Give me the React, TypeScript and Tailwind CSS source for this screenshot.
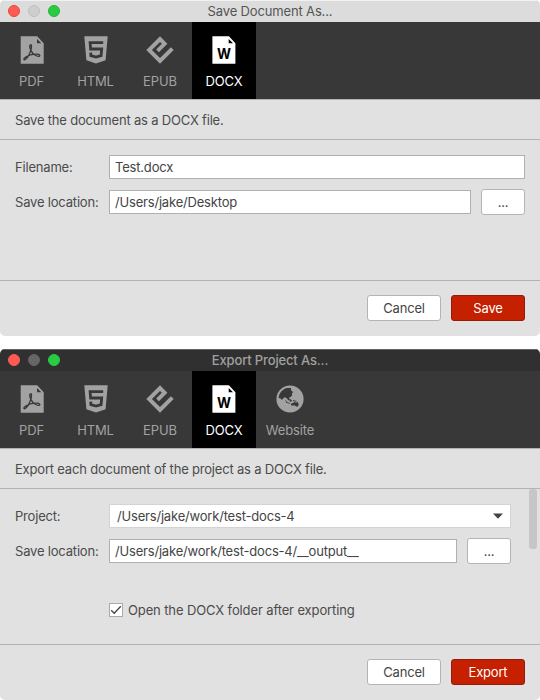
import type { ReactNode } from "react";

function PageShape() {
  return <path fillRule="evenodd" d="M0 0H16.5L23 7V27.5H0ZM16.3 2.6V7H20.6Z" />;
}

function PdfIcon() {
  return (
    <svg className="block h-7 w-6" viewBox="0 0 24 28" fill="currentColor">
      <g transform="translate(.7 .3)">
        <PageShape />
        <path
          d="M9.8 8.5C8.5 8.7 9 11.5 10.3 14.3C12.2 18.2 16 20.3 18.4 20C20 19.6 18.8 18 16.4 17.9C11.8 17.8 7 19.3 4.4 21.2C2.4 22.8 3.2 24.1 4.6 23.2C6.7 21.6 9.5 16.5 10.6 12C11 9.7 10.8 8.4 9.8 8.5Z"
          fill="none"
          stroke="#383838"
          strokeWidth="1.35"
        />
      </g>
    </svg>
  );
}

function HtmlIcon() {
  return (
    <svg className="block h-7 w-6" viewBox="0 0 24 28" fill="currentColor">
      <path d="M.3 .3H23.7L21.6 24.3L12 27.6L2.4 24.3Z" />
      <path
        d="M19.2 6.7H6.1L6.6 13H17.7L17.1 19.6L12 21.1L6.9 19.6L6.7 16.7"
        fill="none"
        stroke="#383838"
        strokeWidth="2.8"
      />
    </svg>
  );
}

function EpubIcon() {
  return (
    <svg className="block h-7 w-7" viewBox="0 0 28 28" fill="currentColor">
      <path d="M14 .3L21.4 7.7L12.9 16.2L10.2 13.5L15.9 7.8L14 5.9L5.9 14L14 22.1L24.9 11.2L27.7 14L14 27.7L.3 14Z" />
    </svg>
  );
}

function DocxIcon() {
  return (
    <svg className="block h-7 w-6" viewBox="0 0 24 28" fill="currentColor">
      <g transform="translate(.4 .3)">
        <PageShape />
        <text
          x="4.5"
          y="22.8"
          textLength="14"
          lengthAdjust="spacingAndGlyphs"
          className="fill-black font-['Inter',sans-serif] text-[14px] font-bold tracking-normal"
        >
          W
        </text>
      </g>
    </svg>
  );
}

function GlobeIcon() {
  return (
    <svg className="block h-7 w-7" viewBox="0 0 28 28" fill="currentColor">
      <circle cx="14" cy="14" r="13.6" />
      <g fill="#383838">
        <path d="M2.6 13.2C2.8 8.4 6.3 4.2 10.8 3L15.2 2.9L14.8 5L17.3 7.2L15.7 8.2L16.3 10L14.6 11.9L13 12.4L13.9 14.5L12.5 15.6L10.5 13L8.4 12.2L6.6 14.2L5.3 14.7L4.2 12.9Z" />
        <path d="M8.8 14.3L11.4 17.2L14 18L13.6 18.8L10.4 17.7Z" />
        <path d="M14.2 14L16 15.6L14.8 17L13.3 15.7Z" />
        <path d="M14.8 18.8L17.3 17.8L18.6 17L20.2 17.7L21.2 16.4L22.8 19.2L21.9 21.4L20.1 21.6L18.6 20.2L15.6 20.8Z" />
        <path d="M16.8 15L20.6 16.1L19.8 16.7L17 16Z" />
      </g>
    </svg>
  );
}

function Tab({ icon, label, width, active }: { icon: ReactNode; label: string; width: string; active?: boolean }) {
  return (
    <div
      className={`flex h-full flex-col items-center pt-[14px] ${width} ${
        active ? "bg-black text-white" : "text-[#a2a2a2]"
      }`}
    >
      <div className="flex h-7 items-center">{icon}</div>
      <span className="mt-[7px] text-[13px] leading-[20px] tracking-[-0.12px]">{label}</span>
    </div>
  );
}

function Toolbar({ website }: { website?: boolean }) {
  return (
    <div className="flex h-[77px] bg-[#383838]">
      <Tab width="w-[63px]" icon={<PdfIcon />} label="PDF" />
      <Tab width="w-[65px]" icon={<HtmlIcon />} label="HTML" />
      <Tab width="w-16" icon={<EpubIcon />} label="EPUB" />
      <Tab width="w-16" icon={<DocxIcon />} label="DOCX" active />
      {website && <Tab width="w-[68px]" icon={<GlobeIcon />} label="Website" />}
    </div>
  );
}

function TitleBar({ title, dark }: { title: string; dark?: boolean }) {
  return (
    <div
      className={`relative flex h-[22px] items-center justify-center border-t text-[13px] tracking-[-0.15px] ${
        dark ? "border-[#626262] bg-[#303030] font-medium text-[#a0a0a0]" : "border-[#f1f1f1] bg-[#dcdcdc] text-[#555]"
      }`}
    >
      <div className="absolute left-2 top-[4px] flex gap-2">
        <i className={`size-3 rounded-full border bg-[#ff5b52] ${dark ? "border-[#ff5b52]" : "border-[#e6453f]"}`} />
        <i className={`size-3 rounded-full border ${dark ? "border-[#666] bg-[#666]" : "border-[#bdbdbd] bg-[#cecece]"}`} />
        <i className={`size-3 rounded-full border bg-[#29cb43] ${dark ? "border-[#29cb43]" : "border-[#1fb636]"}`} />
      </div>
      <span className="-mt-px">{title}</span>
    </div>
  );
}

function Button({ children, primary, small }: { children: ReactNode; primary?: boolean; small?: boolean }) {
  return (
    <button
      className={`flex h-[26px] shrink-0 items-center justify-center rounded-[3px] border text-[13px] ${
        small ? "w-11" : "w-[74px]"
      } ${primary ? "border-[#941c08] bg-[#c52000] text-white" : "border-[#b4b4b4] bg-white text-[#444]"}`}
    >
      {children}
    </button>
  );
}

function Row({ label, children }: { label: string; children: ReactNode }) {
  return (
    <div className="flex h-[26px] items-center">
      <label className="w-[94px] shrink-0 whitespace-nowrap">{label}</label>
      {children}
    </div>
  );
}

function Field({ value }: { value: string }) {
  return (
    <div className="flex h-6 flex-1 items-center border border-[#b0b0b0] bg-white pl-[5px] text-[#444]">{value}</div>
  );
}

function Footer({ action }: { action: string }) {
  return (
    <div className="flex flex-1 justify-end gap-[10px] border-t border-[#b3b3b3] pr-[15px] pt-[14px]">
      <Button>Cancel</Button>
      <Button primary>{action}</Button>
    </div>
  );
}

export default function App() {
  return (
    <div className="flex h-[700px] w-[540px] flex-col gap-[13px] bg-white font-['Inter','Liberation_Sans',sans-serif] text-[13px] leading-5 tracking-[-0.19px] text-[#4b4b4b]">
      <section className="flex h-[336px] flex-col overflow-hidden rounded-[5px] bg-[#e1e1e1]">
        <TitleBar title="Save Document As..." />
        <Toolbar />
        <div className="flex h-[41px] items-center border-y border-[#b3b3b3] pl-[15px] pt-px">
          Save the document as a DOCX file.
        </div>
        <div className="flex h-[140px] flex-col gap-[9px] px-[15px] pt-[14px]">
          <Row label="Filename:">
            <Field value="Test.docx" />
          </Row>
          <Row label="Save location:">
            <Field value="/Users/jake/Desktop" />
            <div className="ml-[10px]">
              <Button small>...</Button>
            </div>
          </Row>
        </div>
        <Footer action="Save" />
      </section>

      <section className="flex h-[351px] flex-col overflow-hidden rounded-[5px] bg-[#e1e1e1]">
        <TitleBar title="Export Project As..." dark />
        <Toolbar website />
        <div className="flex h-[41px] items-center border-y border-[#b3b3b3] pl-[15px] pt-px">
          Export each document of the project as a DOCX file.
        </div>
        <div className="flex h-[155px] justify-between pl-[15px] pr-[3px]">
          <div className="flex w-[496px] flex-col gap-[9px] pt-[14px]">
            <Row label="Project:">
              <div className="flex h-6 flex-1 items-center justify-between border border-[#d3d3d3] bg-white pl-[7px] pr-[7px] text-[#444]">
                <span>/Users/jake/work/test-docs-4</span>
                <svg className="h-[6px] w-[10px]" viewBox="0 0 10 6" fill="#444">
                  <path d="M0 .5H10L5 5.8Z" />
                </svg>
              </div>
            </Row>
            <Row label="Save location:">
              <Field value="/Users/jake/work/test-docs-4/__output__" />
              <div className="ml-[10px]">
                <Button small>...</Button>
              </div>
            </Row>
            <div className="ml-[94px] mt-[27px] flex h-5 items-center gap-[5px] tracking-[-0.12px]">
              <span className="flex size-[14px] items-center justify-center border border-[#aaa] bg-white">
                <svg className="size-3" viewBox="0 0 12 12" fill="none" stroke="#444" strokeWidth="1.3">
                  <path d="M1.2 6.3L4.2 9.3L10.8 2.3" />
                </svg>
              </span>
              <span>Open the DOCX folder after exporting</span>
            </div>
          </div>
          <div className="h-[60px] w-2 rounded-[3px] bg-[#c6c6c6]" />
        </div>
        <Footer action="Export" />
      </section>
    </div>
  );
}
